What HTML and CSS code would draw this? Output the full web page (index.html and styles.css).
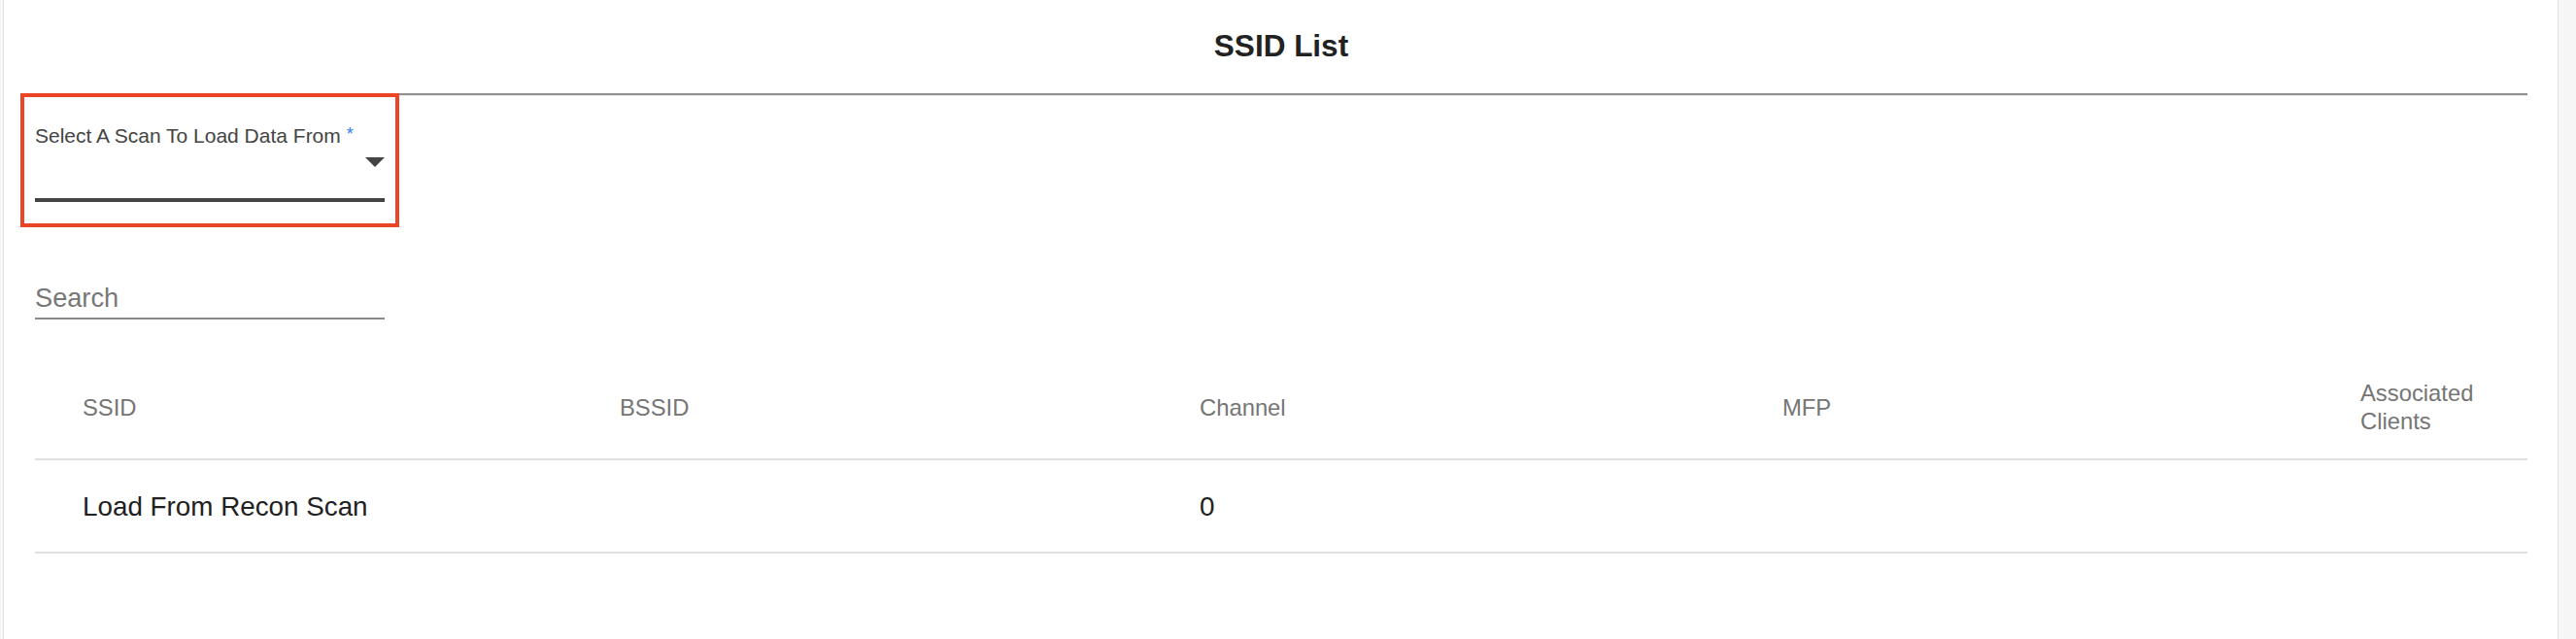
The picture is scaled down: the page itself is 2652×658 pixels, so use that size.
FILE: index.html
```html
<!DOCTYPE html>
<html lang="en">
<head>
<meta charset="utf-8">
<title>SSID List</title>
<link rel="stylesheet" href="styles.css">
</head>
<body>
<main class="card">
  <h1 class="title">SSID List</h1>
  <hr class="divider">
  <div class="select-field">
    <div class="select-label">Select A Scan To Load Data From <span class="required">*</span></div>
    <div class="select-input"><span class="arrow"></span></div>
    <div class="highlight"></div>
  </div>
  <div class="search-field"><span class="placeholder">Search</span></div>
  <table class="ssid-table">
    <colgroup>
      <col class="c1"><col class="c2"><col class="c3"><col class="c4"><col class="c5">
    </colgroup>
    <thead>
      <tr>
        <th class="first">SSID</th>
        <th>BSSID</th>
        <th>Channel</th>
        <th>MFP</th>
        <th>Associated Clients</th>
      </tr>
    </thead>
    <tbody>
      <tr>
        <td class="first">Load From Recon Scan</td>
        <td></td>
        <td>0</td>
        <td></td>
        <td></td>
      </tr>
    </tbody>
  </table>
</main>
</body>
</html>
```
FILE: styles.css
```css
* { box-sizing: border-box; }

html, body {
  margin: 0;
  padding: 0;
  background: #f6f6f6;
  font-family: "Liberation Sans", Arial, Helvetica, sans-serif;
}

.card {
  margin-left: 3px;
  width: 2631px;
  min-height: 658px;
  background: #ffffff;
  border-left: 1px solid #e2e2e2;
  border-right: 1px solid #e2e2e2;
  padding: 28px 31px 0 32px;
}

.title {
  margin: 0;
  text-align: center;
  font-size: 31.5px;
  line-height: 38px;
  font-weight: bold;
  color: #222222;
}

.divider {
  margin: 30px 0 0 0;
  height: 0;
  border: 0;
  border-top: 2px solid #8f8f8f;
  border-bottom: 1px solid #ececec;
}

.select-field {
  position: relative;
  width: 360px;
  margin-top: 27px;
}

.select-label {
  font-size: 21px;
  line-height: 24px;
  color: #444444;
  white-space: nowrap;
}

.required {
  color: #2f80ed;
  font-size: 18px;
  vertical-align: 3px;
}

.select-input {
  height: 56px;
  border-bottom: 4px solid #444444;
  display: flex;
  justify-content: flex-end;
  align-items: flex-start;
  padding-top: 10px;
}

.arrow {
  width: 0;
  height: 0;
  border-left: 10px solid transparent;
  border-right: 10px solid transparent;
  border-top: 10px solid #444444;
}

.highlight {
  position: absolute;
  left: -15px;
  right: -15px;
  top: -30px;
  bottom: -26px;
  border: 4px solid #ec4426;
  pointer-events: none;
}

.search-field {
  width: 360px;
  margin-top: 83px;
  height: 38px;
  padding-bottom: 4px;
  border-bottom: 2px solid #8a8a8a;
  font-size: 27.2px;
  line-height: 32px;
  color: #777777;
}

.ssid-table {
  width: 100%;
  margin-top: 35px;
  border-collapse: collapse;
  table-layout: fixed;
}

.c1 { width: 602px; }
.c2 { width: 597px; }
.c3 { width: 600px; }
.c4 { width: 595px; }
.c5 { width: 172px; }

.ssid-table th {
  text-align: left;
  font-weight: normal;
  font-size: 23.8px;
  line-height: 29px;
  color: #757575;
  padding: 26px 8px 24px 0;
  vertical-align: middle;
  border-bottom: 2px solid #e0e0e0;
}

.ssid-table td {
  font-size: 27.8px;
  line-height: 32px;
  color: #212121;
  padding: 32px 8px 30px 0;
  vertical-align: middle;
  border-bottom: 2px solid #e0e0e0;
}

.ssid-table .first {
  padding-left: 49px;
}
```
